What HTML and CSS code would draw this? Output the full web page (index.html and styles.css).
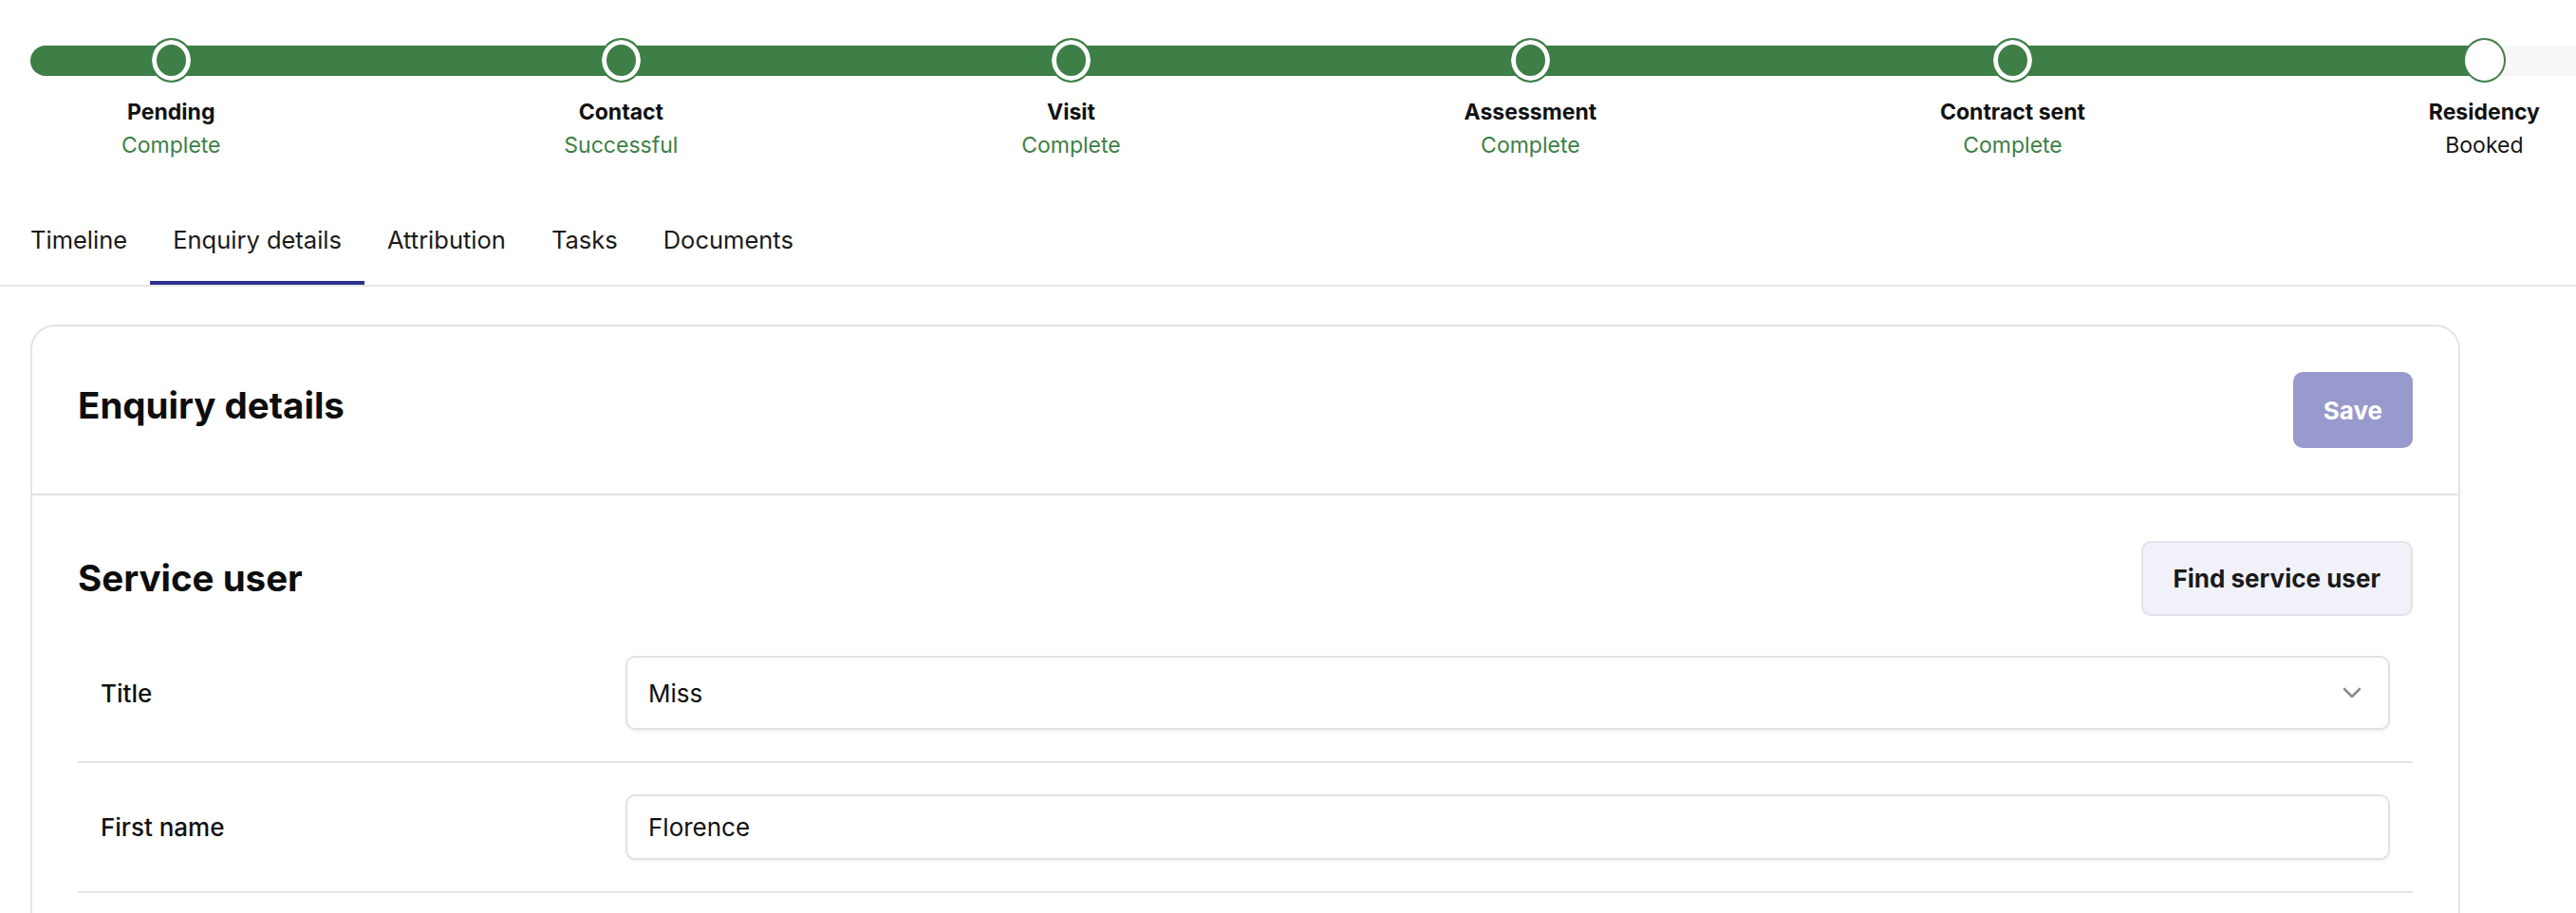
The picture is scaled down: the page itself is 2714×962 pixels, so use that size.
FILE: index.html
```html
<!DOCTYPE html>
<html>
<head>
    <meta charset="UTF-8">
    <title>Enquiry details</title>
    <link rel="stylesheet" href="styles.css">
</head>
<body>
    <div class="stepper">
        <div class="track">
            <div class="fill" style="width: 96.4%"></div>
        </div>
        <div class="steps">
            <div class="step done">
                <span class="dot"></span>
                <span class="step-name">Pending</span>
                <span class="step-status">Complete</span>
            </div>
            <div class="step done">
                <span class="dot"></span>
                <span class="step-name">Contact</span>
                <span class="step-status">Successful</span>
            </div>
            <div class="step done">
                <span class="dot"></span>
                <span class="step-name">Visit</span>
                <span class="step-status">Complete</span>
            </div>
            <div class="step done">
                <span class="dot"></span>
                <span class="step-name">Assessment</span>
                <span class="step-status">Complete</span>
            </div>
            <div class="step done">
                <span class="dot"></span>
                <span class="step-name">Contract sent</span>
                <span class="step-status">Complete</span>
            </div>
            <div class="step current">
                <span class="dot"></span>
                <span class="step-name">Residency</span>
                <span class="step-status">Booked</span>
            </div>
        </div>
    </div>

    <nav class="tabs">
        <a class="tab">Timeline</a>
        <a class="tab active">Enquiry details</a>
        <a class="tab">Attribution</a>
        <a class="tab">Tasks</a>
        <a class="tab">Documents</a>
    </nav>

    <main class="content">
        <div class="card">
            <div class="card-head">
                <h2 class="title">Enquiry details</h2>
                <button class="btn primary">Save</button>
            </div>
            <div class="section">
                <div class="section-head">
                    <h3 class="title">Service user</h3>
                    <button class="btn light">Find service user</button>
                </div>
                <div class="field">
                    <label class="lbl" for="title">Title</label>
                    <div class="select">
                        <select id="title" class="inp">
                            <option>Miss</option>
                            <option>Mrs</option>
                            <option>Ms</option>
                            <option>Mr</option>
                        </select>
                        <svg class="chev" width="20" height="12" viewBox="0 0 20 12">
                            <path d="M2 2l8 8 8-8" fill="none" stroke="#8c8c8c" stroke-width="2.6" stroke-linecap="round" stroke-linejoin="round"/>
                        </svg>
                    </div>
                </div>
                <div class="field">
                    <label class="lbl" for="first">First name</label>
                    <input id="first" class="inp short" type="text" value="Florence">
                </div>
            </div>
        </div>
    </main>
</body>
</html>
```

FILE: styles.css
```css
html, body {
    overflow: hidden;
}

body {
    margin: 0;
    font-family: Inter, "Noto Sans", sans-serif;
    color: #151515;
    background: #fff;
}

/* progress stepper */
.stepper {
    padding: 48px 0 0 32px;
}

.track {
    height: 32px;
    background: #f7f7f7;
    border-radius: 16px 0 0 16px;
    overflow: hidden;
}

.fill {
    height: 100%;
    background: #3d7f47;
}

.steps {
    display: flex;
    justify-content: space-between;
    margin-top: -40px;
    padding: 0 38px 0 96px;
}

.step {
    display: flex;
    flex-direction: column;
    align-items: center;
    font-size: 23px;
    line-height: 35px;
}

.dot {
    width: 45px;
    height: 47px;
    box-sizing: border-box;
    border-radius: 50%;
    border: 2px solid #3d7f47;
    background: #3d7f47;
    box-shadow: inset 0 0 0 5px #fff;
    margin-bottom: 14px;
}

.current .dot {
    background: #fff;
}

.step-name {
    font-weight: 700;
    color: #111;
}

.done .step-status {
    color: #3d7f47;
}

/* tabs */
.tabs {
    display: flex;
    margin-top: 39px;
    padding-left: 8px;
    border-bottom: 2px solid #e5e5e5;
}

.tab {
    padding: 24px 24px;
    font-size: 25.5px;
    line-height: 38px;
    color: #1a1a1a;
    border-bottom: 4px solid transparent;
    cursor: pointer;
}

.tab.active {
    border-bottom-color: #2d3192;
}

/* card */
.content {
    padding: 40px 32px 0;
}

.card {
    max-width: 2560px;
    box-sizing: border-box;
    border: 2px solid #e4e4e4;
    border-radius: 26px;
}

.card-head {
    display: flex;
    justify-content: space-between;
    align-items: center;
    padding: 48px;
    border-bottom: 2px solid #e4e4e4;
}

.title {
    margin: 0 0 9px;
    font-size: 38.5px;
    line-height: 1.2;
    font-weight: 700;
    color: #0d0d0d;
}

.btn {
    font-family: inherit;
    font-size: 26px;
    font-weight: 700;
    border-radius: 10px;
    padding: 0 32px;
    cursor: pointer;
}

.primary {
    height: 80px;
    background: #9899cc;
    color: #fff;
    border: 0;
}

.light {
    height: 79px;
    background: #f1f2f9;
    color: #1a1a1a;
    border: 2px solid #e2e3ea;
}

.section {
    padding: 48px 48px 120px;
}

.section-head {
    display: flex;
    justify-content: space-between;
    align-items: center;
    margin-bottom: 9px;
}

.section-head .title {
    margin: 0;
}

/* form rows */
.field {
    display: grid;
    grid-template-columns: 553px 1fr;
    align-items: center;
    padding: 33px 24px;
    border-bottom: 2px solid #e4e4e4;
}

.lbl {
    font-size: 26px;
    font-weight: 500;
    color: #111;
}

.inp {
    width: 100%;
    box-sizing: border-box;
    height: 78px;
    padding: 0 22px;
    font-family: inherit;
    font-size: 26px;
    color: #111;
    background: #fff;
    border: 2px solid #e2e2e2;
    border-radius: 10px;
    box-shadow: 0 2px 3px rgba(0,0,0,.05);
    outline: none;
}

.inp.short {
    height: 69px;
}

.select {
    position: relative;
}

.select select {
    appearance: none;
    -webkit-appearance: none;
}

.chev {
    position: absolute;
    right: 30px;
    top: 33px;
    pointer-events: none;
}
```
